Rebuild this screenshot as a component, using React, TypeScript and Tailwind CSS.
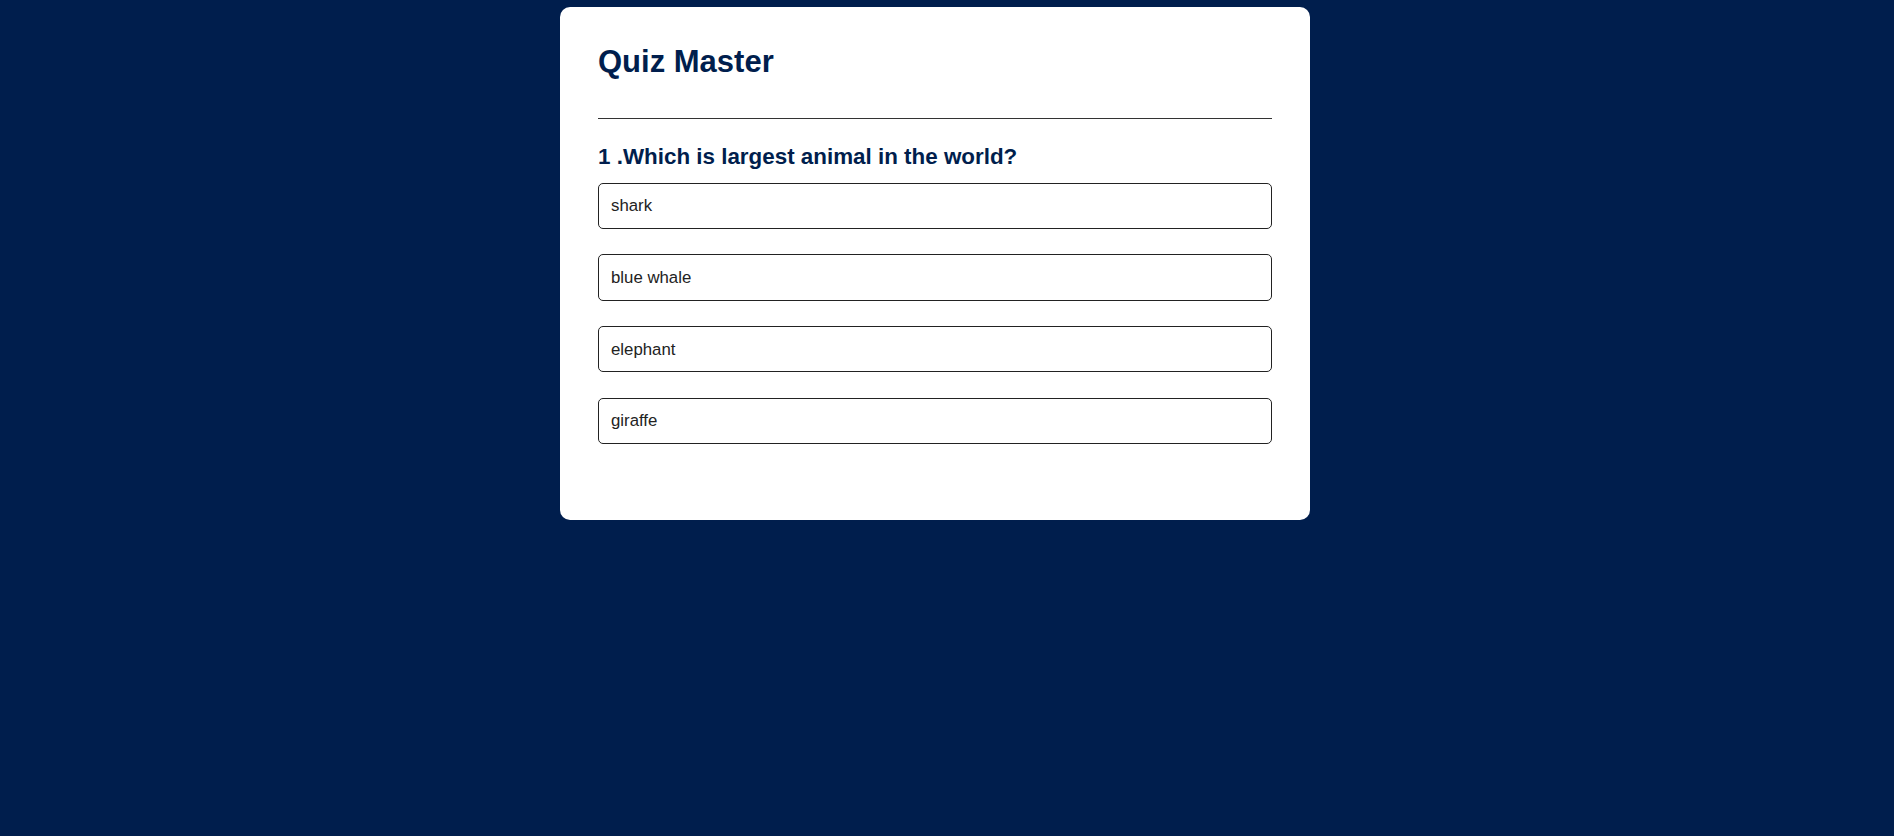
const answers = ['shark', 'blue whale', 'elephant', 'giraffe'];

export default function App() {
  return (
    <div
      className="min-h-[836px] w-full bg-[#001e4d] pt-[7px] pl-[560px]"
      style={{ fontFamily: '"Liberation Sans", Arial, sans-serif' }}
    >
      <div className="w-[750px] h-[513px] bg-white rounded-[10px] px-[38px] pt-[37px]">
        <h1 className="text-[31px] leading-[36px] font-bold text-[#001e4d]">Quiz Master</h1>

        <div className="mt-[38px] border-t border-[#333]" />

        {/* question */}
        <div className="pt-[24.6px]">
          <h2 className="text-[22.4px] leading-[26px] font-bold text-[#001e4d]">
            1 .Which is largest animal in the world?
          </h2>
          <div className="mt-[13px] flex flex-col gap-[25.6px]">
            {answers.map((a) => (
              <button
                key={a}
                className="h-[46.2px] w-full flex items-center px-[12px] text-[16.8px] text-[#222] bg-white border border-[#222] rounded-[5px] text-left"
              >
                {a}
              </button>
            ))}
          </div>
        </div>
      </div>
    </div>
  );
}
